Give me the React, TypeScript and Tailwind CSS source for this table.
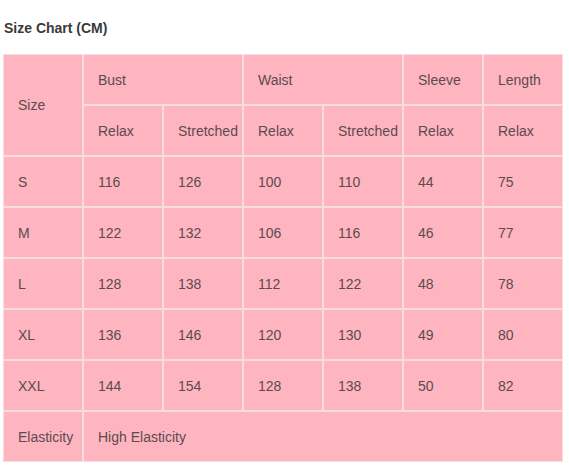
import React from "react";

const rows = [
  ["S", "116", "126", "100", "110", "44", "75"],
  ["M", "122", "132", "106", "116", "46", "77"],
  ["L", "128", "138", "112", "122", "48", "78"],
  ["XL", "136", "146", "120", "130", "49", "80"],
  ["XXL", "144", "154", "128", "138", "50", "82"],
];

const cell = "bg-[#ffb5c0] flex items-center pl-[14px] pt-[1px] text-[14px] text-[#5b4b50]";

export default function App() {
  return (
    <div className="w-[569px] h-[469px] bg-white pt-[20px] pl-[3px]" style={{ fontFamily: '"Liberation Sans", Arial, sans-serif' }}>
      <div className="text-[14px] font-bold text-[#3a3a3a] pl-[1px] leading-[17px]">Size Chart (CM)</div>
      <div className="mt-[17px] w-[560px] grid grid-cols-[repeat(7,78px)] grid-rows-[repeat(8,49px)] gap-[2px] p-[1px] bg-[#f6dde0]">
        <div className={`${cell} row-span-2 pl-[13px]`}>Size</div>
        <div className={`${cell} col-span-2`}>Bust</div>
        <div className={`${cell} col-span-2`}>Waist</div>
        <div className={cell}>Sleeve</div>
        <div className={cell}>Length</div>
        <div className={cell}>Relax</div>
        <div className={cell}>Stretched</div>
        <div className={cell}>Relax</div>
        <div className={cell}>Stretched</div>
        <div className={cell}>Relax</div>
        <div className={cell}>Relax</div>
        {rows.map((r) =>
          r.map((v, i) => (
            <div key={r[0] + i} className={`${cell} ${i === 0 ? "pl-[13px]" : ""}`}>
              {v}
            </div>
          ))
        )}
        <div className={`${cell} pl-[13px]`}>Elasticity</div>
        <div className={`${cell} col-span-6`}>High Elasticity</div>
      </div>
    </div>
  );
}
